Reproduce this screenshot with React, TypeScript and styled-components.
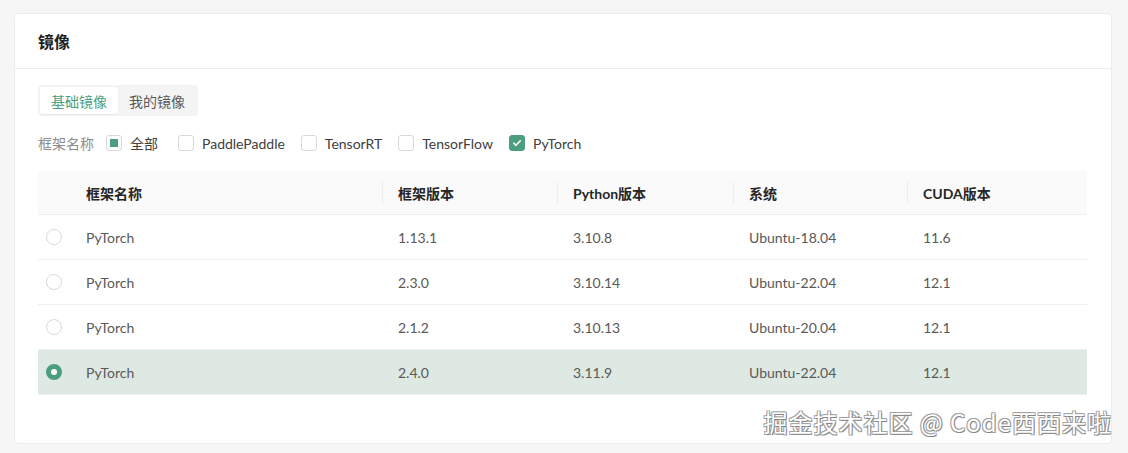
import React, {useState} from 'react';
import styled, {createGlobalStyle} from 'styled-components';

const GlobalStyle = createGlobalStyle`
  html, body {
    margin: 0;
    padding: 0;
    background: #f6f6f6;
    font-family: Lato, 'Noto Sans CJK SC', 'Noto Sans', sans-serif;
  }
`;

const Page = styled.div`
  position: relative;
  width: 1128px;
  height: 453px;
  box-sizing: border-box;
  padding: 13px 16px 10px 14px;
`;

const Card = styled.section`
  background: #fff;
  border: 1px solid #ececec;
  border-radius: 4px;
  height: 431px;
  box-sizing: border-box;
`;

const CardHeader = styled.header`
  height: 54px;
  display: flex;
  align-items: center;
  padding: 0 23px;
  border-bottom: 1px solid #ededed;
  font-size: 16px;
  font-weight: 700;
  color: #1f1f1f;
`;

const CardBody = styled.div`
  padding: 16px 24px 0 23px;
`;

const Segmented = styled.div`
  display: inline-flex;
  padding: 2px;
  background: #f4f4f4;
  border-radius: 4px;
`;

const Segment = styled.button<{$active?: boolean}>`
  height: 27px;
  padding: 0 11px;
  border: none;
  border-radius: 3px;
  font-family: inherit;
  font-size: 14px;
  cursor: pointer;
  background: ${p => (p.$active ? '#fff' : 'transparent')};
  color: ${p => (p.$active ? '#4c9e7f' : '#595959')};
  box-shadow: ${p => (p.$active ? '0 1px 2px rgba(0,0,0,0.06)' : 'none')};
`;

const FilterRow = styled.div`
  display: flex;
  align-items: center;
  height: 22px;
  margin-top: 16px;
  font-size: 14px;
  color: #404040;
`;

const FilterLabel = styled.span`
  color: #8c8c8c;
  margin-right: 12px;
`;

const CheckItem = styled.label`
  display: inline-flex;
  align-items: center;
  gap: 8px;
  margin-right: 16px;
  cursor: pointer;
`;

const Box = styled.span<{$state: 'none' | 'half' | 'full'}>`
  width: 16px;
  height: 16px;
  box-sizing: border-box;
  border-radius: 3px;
  display: inline-flex;
  align-items: center;
  justify-content: center;
  border: 1px solid ${p => (p.$state === 'full' ? '#4c9e7f' : '#d9d9d9')};
  background: ${p => (p.$state === 'full' ? '#4c9e7f' : '#fff')};

  &::after {
    content: '';
    display: ${p => (p.$state === 'half' ? 'block' : 'none')};
    width: 8px;
    height: 8px;
    background: #4c9e7f;
  }
`;

const CheckText = styled.span<{$wide?: boolean}>`
  margin-right: ${p => (p.$wide ? '4px' : '0')};
`;

const Table = styled.div`
  margin-top: 17px;
  font-size: 14px;
`;

const Row = styled.div<{$head?: boolean; $selected?: boolean}>`
  display: grid;
  grid-template-columns: 32px 312px 175px 176px 174px 1fr;
  align-items: center;
  height: ${p => (p.$head ? '43px' : '44px')};
  border-bottom: 1px solid #efefef;
  background: ${p => (p.$head ? '#fafafa' : p.$selected ? '#dde9e2' : '#fff')};
  color: ${p => (p.$head ? '#262626' : '#595959')};
  font-weight: ${p => (p.$head ? 700 : 400)};
  cursor: ${p => (p.$head ? 'default' : 'pointer')};
`;

const Cell = styled.div<{$sep?: boolean}>`
  position: relative;
  padding: 0 16px;
  white-space: nowrap;

  &::before {
    content: '';
    display: ${p => (p.$sep ? 'block' : 'none')};
    position: absolute;
    left: 0;
    top: 50%;
    transform: translateY(-50%);
    width: 1px;
    height: 22px;
    background: #ededed;
  }
`;

const RadioCell = styled.div`
  display: flex;
  justify-content: center;
`;

const Radio = styled.span<{$checked?: boolean}>`
  width: 16px;
  height: 16px;
  box-sizing: border-box;
  border-radius: 50%;
  background: #fff;
  border: ${p => (p.$checked ? '5px solid #4c9e7f' : '1px solid #d9d9d9')};
`;

const Watermark = styled.div`
  position: absolute;
  right: 16px;
  bottom: 14px;
  font-size: 24px;
  letter-spacing: 1px;
  color: #fff;
  font-family: 'Noto Sans CJK SC', sans-serif;
  text-shadow: 1px 1px 0 #777, -1px -1px 0 #999, 1px -1px 0 #999, -1px 1px 0 #999;
  opacity: 0.9;
  pointer-events: none;
`;

const frameworks = ['PaddlePaddle', 'TensorRT', 'TensorFlow', 'PyTorch'];

const images = [
  {id: 1, name: 'PyTorch', version: '1.13.1', python: '3.10.8', os: 'Ubuntu-18.04', cuda: '11.6'},
  {id: 2, name: 'PyTorch', version: '2.3.0', python: '3.10.14', os: 'Ubuntu-22.04', cuda: '12.1'},
  {id: 3, name: 'PyTorch', version: '2.1.2', python: '3.10.13', os: 'Ubuntu-20.04', cuda: '12.1'},
  {id: 4, name: 'PyTorch', version: '2.4.0', python: '3.11.9', os: 'Ubuntu-22.04', cuda: '12.1'},
];

const CheckIcon = () => (
  <svg width="10" height="10" viewBox="0 0 10 10" fill="none">
    <path d="M1.8 5.2 L4 7.3 L8.3 2.8" stroke="#fff" strokeWidth="1.6" strokeLinecap="round" strokeLinejoin="round" />
  </svg>
);

export default function App() {
  const [tab, setTab] = useState(0);
  const [checked, setChecked] = useState<string[]>(['PyTorch']);
  const [selected, setSelected] = useState(4);

  const toggle = (f: string) =>
    setChecked(c => (c.includes(f) ? c.filter(x => x !== f) : [...c, f]));

  const allState =
    checked.length === 0 ? 'none' : checked.length === frameworks.length ? 'full' : 'half';

  return (
    <>
      <GlobalStyle />
      <Page>
        <Card>
          <CardHeader>镜像</CardHeader>
          <CardBody>
            <Segmented>
              <Segment $active={tab === 0} onClick={() => setTab(0)}>基础镜像</Segment>
              <Segment $active={tab === 1} onClick={() => setTab(1)}>我的镜像</Segment>
            </Segmented>

            <FilterRow>
              <FilterLabel>框架名称</FilterLabel>
              <CheckItem
                onClick={() => setChecked(allState === 'full' ? [] : frameworks)}
              >
                <Box $state={allState}>{allState === 'full' && <CheckIcon />}</Box>
                <CheckText $wide>全部</CheckText>
              </CheckItem>
              {frameworks.map(f => (
                <CheckItem key={f} onClick={() => toggle(f)}>
                  <Box $state={checked.includes(f) ? 'full' : 'none'}>
                    {checked.includes(f) && <CheckIcon />}
                  </Box>
                  <CheckText>{f}</CheckText>
                </CheckItem>
              ))}
            </FilterRow>

            <Table>
              <Row $head>
                <div />
                <Cell>框架名称</Cell>
                <Cell $sep>框架版本</Cell>
                <Cell $sep>Python版本</Cell>
                <Cell $sep>系统</Cell>
                <Cell $sep>CUDA版本</Cell>
              </Row>
              {images.map(img => (
                <Row
                  key={img.id}
                  $selected={selected === img.id}
                  onClick={() => setSelected(img.id)}
                >
                  <RadioCell>
                    <Radio $checked={selected === img.id} />
                  </RadioCell>
                  <Cell>{img.name}</Cell>
                  <Cell>{img.version}</Cell>
                  <Cell>{img.python}</Cell>
                  <Cell>{img.os}</Cell>
                  <Cell>{img.cuda}</Cell>
                </Row>
              ))}
            </Table>
          </CardBody>
        </Card>
        <Watermark>掘金技术社区 @ Code西西来啦</Watermark>
      </Page>
    </>
  );
}
